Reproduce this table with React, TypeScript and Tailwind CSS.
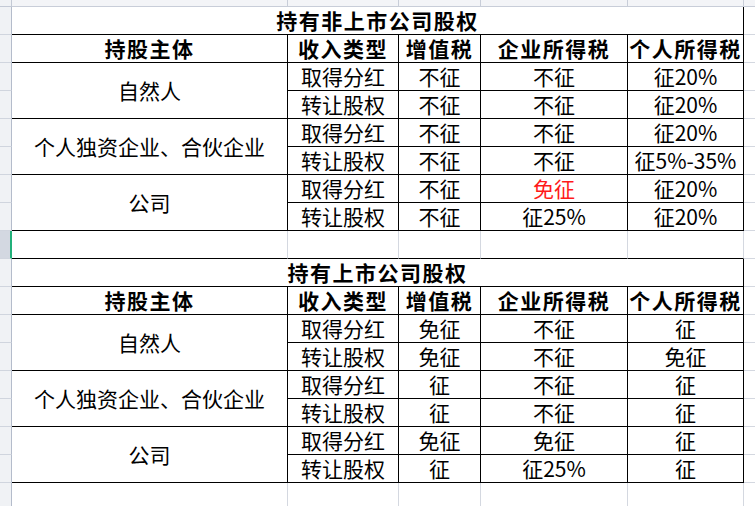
const FONT = { fontFamily: '"Noto Sans CJK SC", "Liberation Sans", sans-serif' };

type Row = [string, string, string, string];
type Group = { subject: string; rows: [Row, Row] };
type Section = { title: string; groups: Group[]; red?: [number, number] };

const sections: Section[] = [
  {
    title: '持有非上市公司股权',
    groups: [
      { subject: '自然人', rows: [['取得分红', '不征', '不征', '征20%'], ['转让股权', '不征', '不征', '征20%']] },
      {
        subject: '个人独资企业、合伙企业',
        rows: [['取得分红', '不征', '不征', '征20%'], ['转让股权', '不征', '不征', '征5%-35%']],
      },
      { subject: '公司', rows: [['取得分红', '不征', '免征', '征20%'], ['转让股权', '不征', '征25%', '征20%']] },
    ],
    red: [2, 0],
  },
  {
    title: '持有上市公司股权',
    groups: [
      { subject: '自然人', rows: [['取得分红', '免征', '不征', '征'], ['转让股权', '免征', '不征', '免征']] },
      {
        subject: '个人独资企业、合伙企业',
        rows: [['取得分红', '征', '不征', '征'], ['转让股权', '征', '不征', '征']],
      },
      { subject: '公司', rows: [['取得分红', '免征', '免征', '征'], ['转让股权', '征', '征25%', '征']] },
    ],
  },
];

const headers = ['持股主体', '收入类型', '增值税', '企业所得税', '个人所得税'];

function RowHead({ selected }: { selected?: boolean }) {
  if (selected) {
    return <div className="bg-[#d3d8e1] border-b border-b-[#d0d5de] border-r-2 border-r-[#21b07a]" />;
  }
  return <div className="bg-[#f0f2f5] border-r border-b border-r-[#b4bccb] border-b-[#d0d5de]" />;
}

function Filler() {
  return <div className="border-b border-[#d4d8e0]" />;
}

function Cell({ children, className = '', red }: { children?: React.ReactNode; className?: string; red?: boolean }) {
  return (
    <div
      className={`flex items-center justify-center whitespace-nowrap border-r border-b border-black text-[21px] leading-none ${
        red ? 'text-[#ff1a1a]' : 'text-black'
      } ${className}`}
    >
      {children}
    </div>
  );
}

function renderSection(s: Section, key: string) {
  const out: React.ReactNode[] = [];
  out.push(<RowHead key={key + 'h0'} />);
  out.push(
    <Cell key={key + 'title'} className="col-span-5 font-bold tracking-[1.5px]">
      {s.title}
    </Cell>,
  );
  out.push(<Filler key={key + 'f0'} />);

  out.push(<RowHead key={key + 'h1'} />);
  headers.forEach((h) =>
    out.push(
      <Cell key={key + h} className="font-bold tracking-[1.5px]">
        {h}
      </Cell>,
    ),
  );
  out.push(<Filler key={key + 'f1'} />);

  s.groups.forEach((g, gi) => {
    g.rows.forEach((r, ri) => {
      const k = `${key}-${gi}-${ri}`;
      out.push(<RowHead key={k + 'h'} />);
      if (ri === 0) {
        out.push(
          <Cell key={k + 's'} className="row-span-2">
            {g.subject}
          </Cell>,
        );
      }
      r.forEach((t, ci) => {
        const red = !!s.red && s.red[0] === gi && s.red[1] === ri && ci === 2;
        out.push(
          <Cell key={k + ci} red={red}>
            {t}
          </Cell>,
        );
      });
      out.push(<Filler key={k + 'f'} />);
    });
  });
  return out;
}

function EmptyRow({ selected, id }: { selected?: boolean; id: string }) {
  return (
    <>
      <RowHead selected={selected} />
      {[0, 1, 2, 3, 4].map((i) => (
        <div key={id + i} className="border-r border-b border-r-[#d4d8e0] border-b-black" />
      ))}
      <Filler />
    </>
  );
}

export default function App() {
  return (
    <div className="h-[506px] w-[755px] overflow-hidden bg-white" style={FONT}>
      <div className="grid grid-cols-[12px_276px_111px_82px_147px_116px_1fr] grid-rows-[7px] auto-rows-[28px]">
        {/* column header strip */}
        <div className="bg-[#f0f2f5] border-r border-b border-[#c3c9d5]" />
        {[0, 1, 2, 3, 4].map((i) => (
          <div key={'c' + i} className="bg-[#f3f4f7] border-r border-b border-[#c8cdd8]" />
        ))}
        <div className="bg-[#f3f4f7] border-b border-[#c8cdd8]" />

        {renderSection(sections[0], 'a')}
        <EmptyRow selected id="e1" />
        {renderSection(sections[1], 'b')}
        <RowHead />
        {[0, 1, 2, 3, 4].map((i) => (
          <div key={'z' + i} className="border-r border-b border-[#d4d8e0]" />
        ))}
        <Filler />
      </div>
    </div>
  );
}
